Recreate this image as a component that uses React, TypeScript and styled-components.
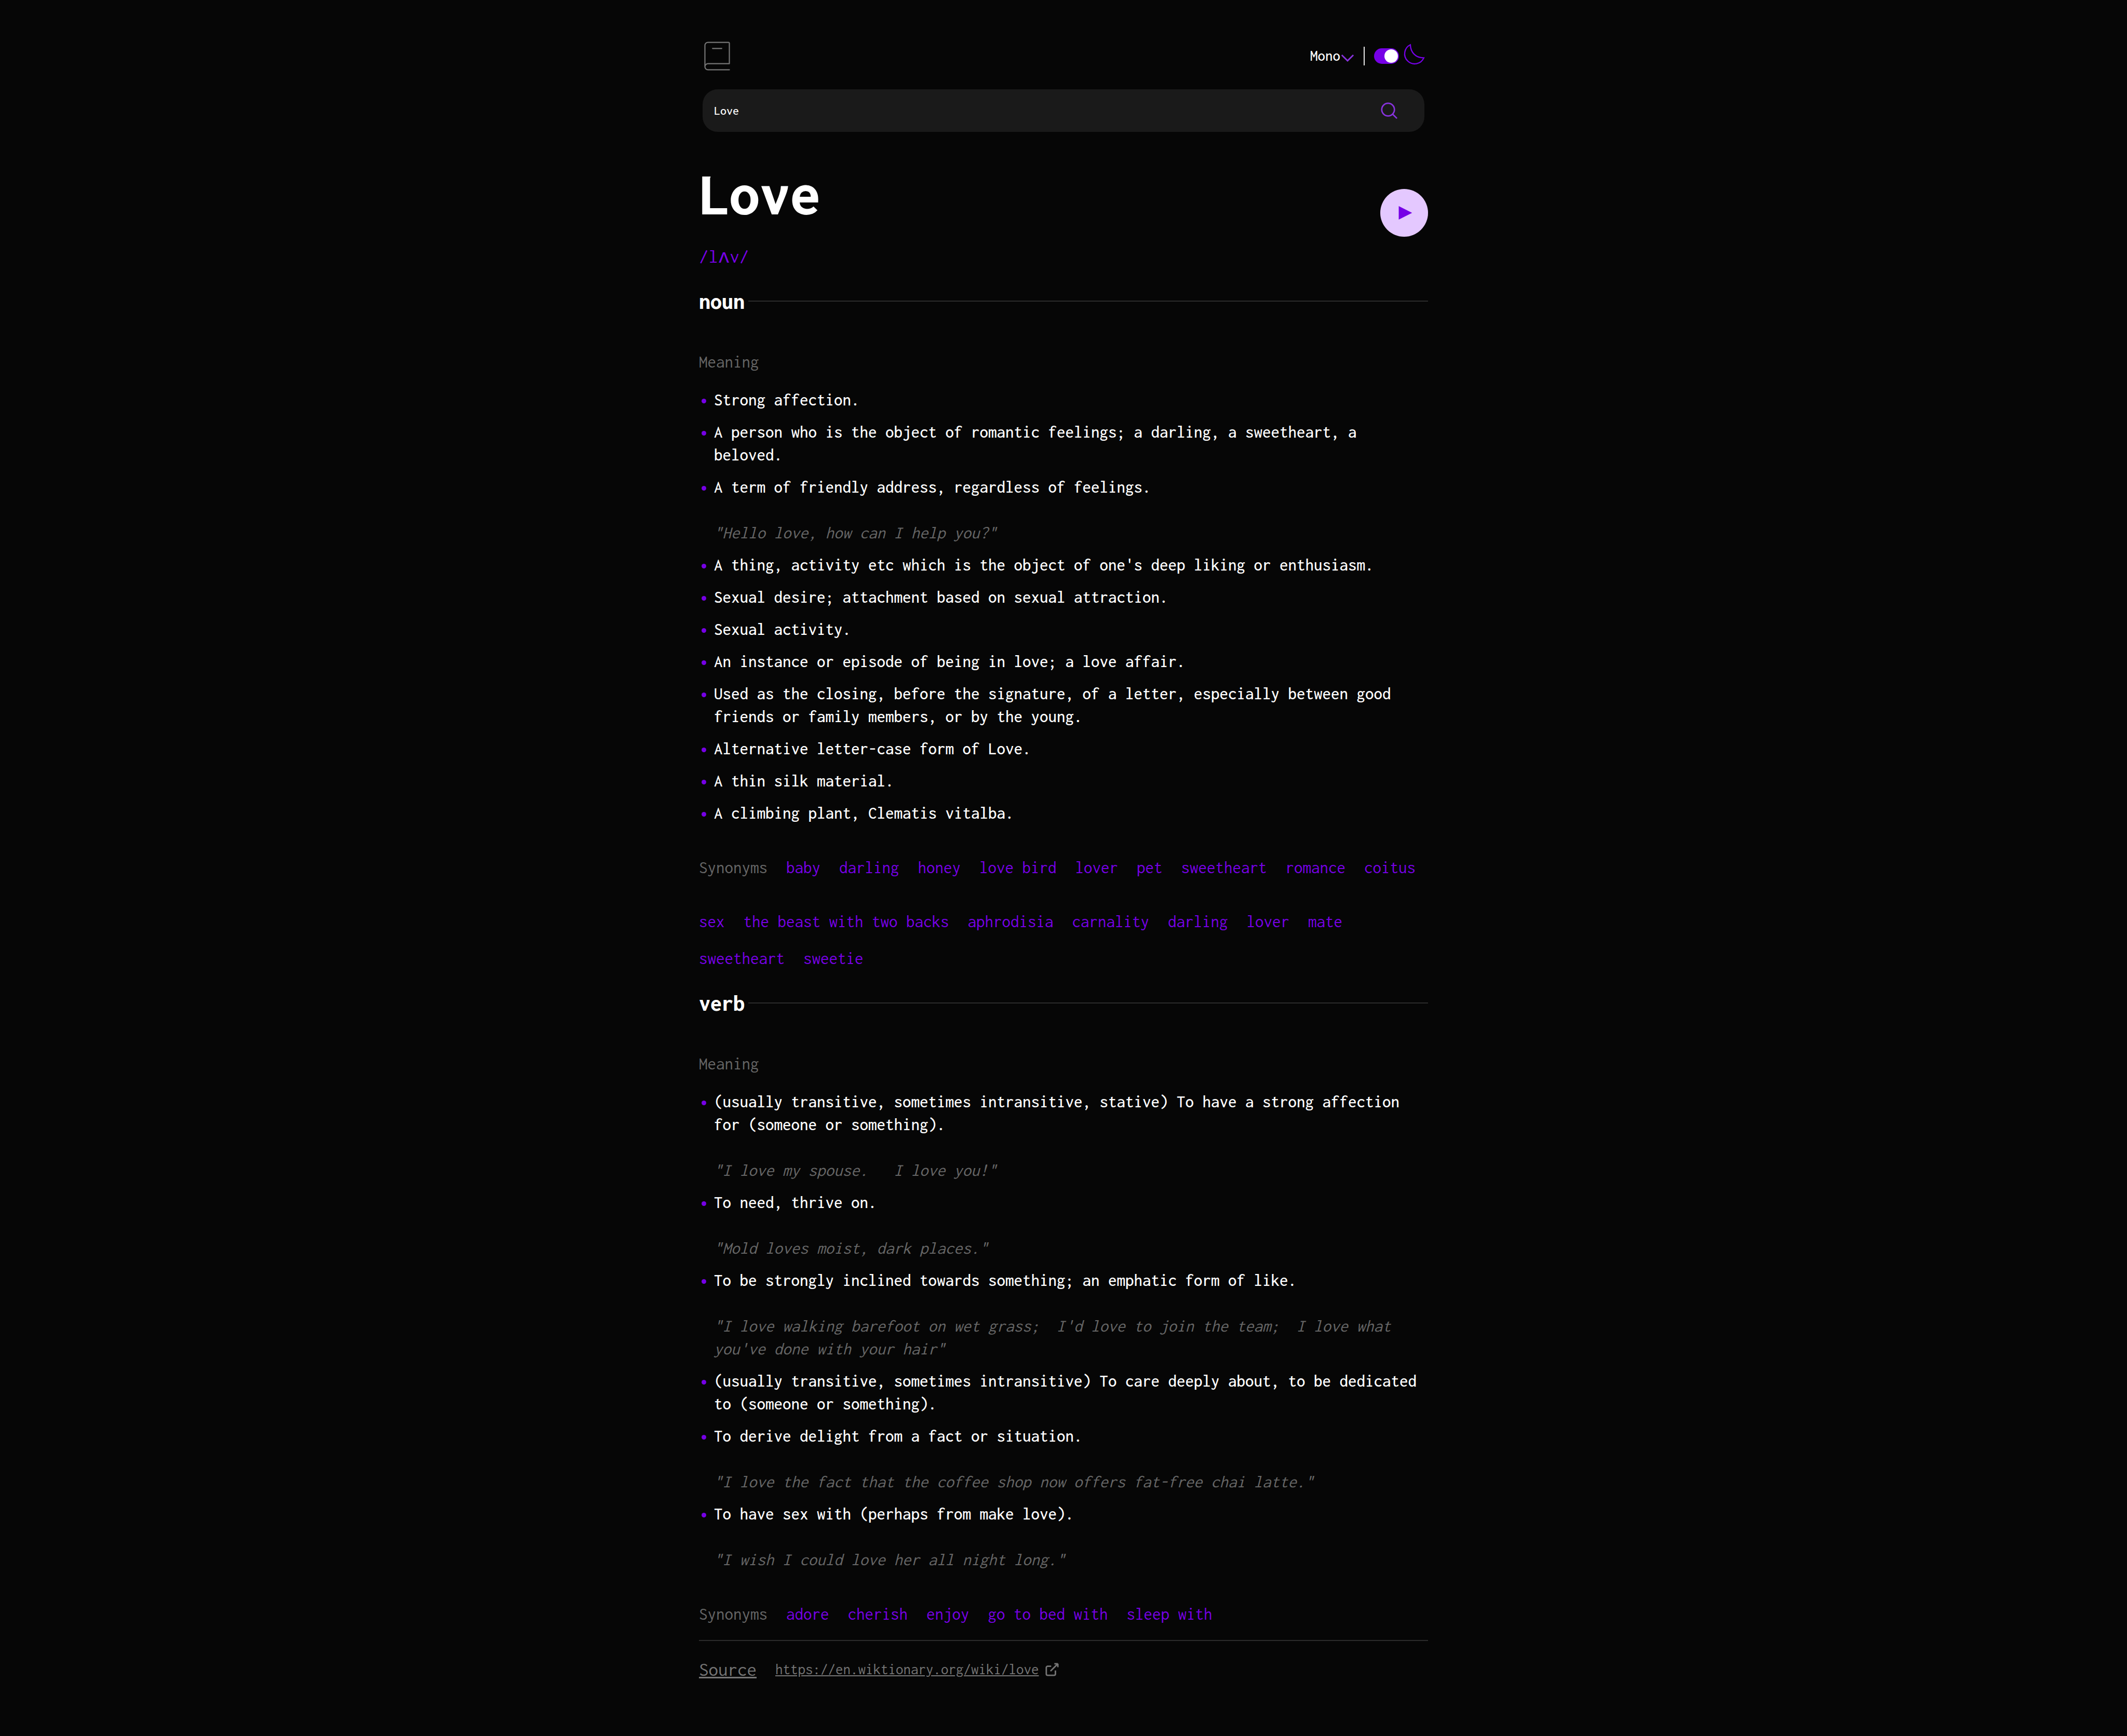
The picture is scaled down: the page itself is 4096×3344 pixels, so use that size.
import React, { useState } from "react";
import styled, { createGlobalStyle } from "styled-components";

const color = {
  page: "#060606",
  field: "#1a1a1a",
  text: "#ffffff",
  muted: "#666666",
  rule: "#2b2b2b",
  accent: "#7600e6",
  icon: "#8833dd",
  line: "#757575",
  play: "#e4c8ff",
};

const GlobalStyle = createGlobalStyle`
  *, *::before, *::after { box-sizing: border-box; }
  body {
    margin: 0;
    background: ${color.page};
    color: ${color.text};
    font: 33px/44px Inconsolata, "Noto Sans Mono CJK SC", "Liberation Mono", monospace;
  }
  h1, h2, h3, p, ul { margin: 0; padding: 0; }
  button, input, select { font-family: inherit; color: inherit; }
`;

const Page = styled.div`
  width: 100%;
  max-width: 1404px;
  margin: 0 auto;
  padding: 72px 0 106px;
`;

const Header = styled.header`
  display: flex;
  align-items: center;
  justify-content: space-between;
  height: 72px;
  margin: 0 7px 28px;
`;

const Logo = styled.svg`
  display: block;
  width: 50px;
  height: 56px;
  margin-left: 3px;
  fill: none;
  stroke: ${color.line};
  stroke-width: 1.5;
  stroke-linecap: round;
`;

const Controls = styled.div`
  display: flex;
  align-items: center;
  gap: 18px;
`;

const FontPicker = styled.label`
  display: flex;
  align-items: center;
`;

const FontSelect = styled.select`
  appearance: none;
  width: 59px;
  height: 44px;
  padding: 0;
  border: 0;
  background: transparent;
  font-size: 29px;
  font-weight: 500;
  line-height: 44px;
`;

const Chevron = styled.svg`
  display: block;
  width: 26px;
  height: 15px;
  margin-top: 6px;
  fill: none;
  stroke: ${color.icon};
  stroke-width: 1.5;
`;

const Divider = styled.span`
  width: 2px;
  height: 36px;
  background: #e9e9e9;
`;

const ThemeSwitch = styled.label`
  display: flex;
  align-items: center;
  gap: 9px;
`;

const Toggle = styled.input`
  appearance: none;
  display: flex;
  align-items: center;
  justify-content: flex-start;
  width: 48px;
  height: 30px;
  margin: 0;
  padding: 0 2px;
  border-radius: 15px;
  background: ${color.muted};

  &::before {
    content: "";
    width: 26px;
    height: 26px;
    border-radius: 50%;
    background: ${color.text};
  }

  &:checked {
    justify-content: flex-end;
    background: ${color.accent};
  }
`;

const Moon = styled.svg`
  display: block;
  width: 40px;
  height: 40px;
  margin-bottom: 6px;
  fill: none;
  stroke: ${color.accent};
  stroke-width: 1.3;
  overflow: visible;
`;

const SearchForm = styled.form`
  display: flex;
  align-items: center;
  height: 82px;
  margin: 0 7px 50px;
  padding: 0 51px 0 22px;
  border-radius: 29px;
  background: ${color.field};
`;

const SearchInput = styled.input`
  flex: 1;
  min-width: 0;
  height: 44px;
  padding: 0;
  border: 0;
  outline: 0;
  background: transparent;
  font-size: 24px;
  font-weight: 500;
`;

const IconButton = styled.button`
  display: flex;
  padding: 0;
  border: 0;
  background: transparent;
`;

const SearchIcon = styled.svg`
  width: 33px;
  height: 33px;
  fill: none;
  stroke: ${color.icon};
  stroke-width: 1.5;
`;

const EntryHead = styled.div`
  display: flex;
  align-items: center;
  justify-content: space-between;
`;

const Word = styled.h1`
  font-size: 117px;
  font-weight: 800;
  line-height: 140px;
`;

const Phonetic = styled.p`
  margin-top: 28px;
  font-size: 37px;
  color: ${color.accent};
`;

const PlayButton = styled.button`
  display: flex;
  width: 92px;
  height: 92px;
  padding: 0;
  border: 0;
  border-radius: 50%;
  background: ${color.play};

  svg {
    width: 100%;
    height: 100%;
    fill: ${color.accent};
  }
`;

const Section = styled.section`
  padding-top: 36px;
`;

const PartHeading = styled.div`
  display: flex;
  align-items: center;
  gap: 7px;

  &::after {
    content: "";
    flex: 1;
    height: 2px;
    background: ${color.rule};
  }
`;

const Part = styled.h2`
  font-size: 44px;
  font-weight: 800;
  line-height: 56px;
`;

const Label = styled.h3`
  font-size: 33px;
  font-weight: 400;
  color: ${color.muted};
`;

const MeaningLabel = styled(Label)`
  margin: 67px 0 29px;
`;

const SynonymLabel = styled(Label)`
  margin-bottom: 33px;
`;

const Meanings = styled.ul`
  display: flex;
  flex-direction: column;
  gap: 18px;
  list-style: none;
`;

const Meaning = styled.li`
  display: grid;
  grid-template-columns: 29px 1fr;
  font-weight: 500;

  &::before {
    content: "";
    width: 9px;
    height: 9px;
    margin: 20px 0 0 5px;
    border-radius: 50%;
    background: ${color.accent};
  }
`;

const Example = styled.p`
  margin-top: 44px;
  font-weight: 400;
  font-style: italic;
  color: ${color.muted};
  white-space: pre-wrap;
`;

const Synonyms = styled.div<{ $wraps: boolean }>`
  display: flex;
  flex-wrap: wrap;
  align-items: flex-start;
  gap: 27px 36px;
  height: ${(p) => (p.$wraps ? "auto" : "44px")};
  margin-top: 61px;
  color: ${color.accent};
`;

const Footer = styled.footer`
  display: flex;
  align-items: center;
  gap: 36px;
  margin-top: 28px;
  padding-top: 33px;
  border-top: 2px solid ${color.rule};
  color: ${color.line};
`;

const SourceLabel = styled.span`
  font-size: 37px;
  text-decoration: underline;
`;

const SourceLink = styled.a`
  display: flex;
  align-items: center;
  gap: 12px;
  font-size: 29px;
  color: inherit;

  svg {
    width: 26px;
    height: 26px;
    fill: none;
    stroke: currentColor;
    stroke-width: 1.5;
  }
`;

type Definition = { text: string; example?: string };
type PartEntry = { part: string; meanings: Definition[]; synonyms: string[] };

const entries: PartEntry[] = [
  {
    part: "noun",
    meanings: [
      { text: "Strong affection." },
      { text: "A person who is the object of romantic feelings; a darling, a sweetheart, a beloved." },
      { text: "A term of friendly address, regardless of feelings.", example: "Hello love, how can I help you?" },
      { text: "A thing, activity etc which is the object of one's deep liking or enthusiasm." },
      { text: "Sexual desire; attachment based on sexual attraction." },
      { text: "Sexual activity." },
      { text: "An instance or episode of being in love; a love affair." },
      { text: "Used as the closing, before the signature, of a letter, especially between good friends or family members, or by the young." },
      { text: "Alternative letter-case form of Love." },
      { text: "A thin silk material." },
      { text: "A climbing plant, Clematis vitalba." },
    ],
    synonyms: [
      "baby", "darling", "honey", "love bird", "lover", "pet", "sweetheart", "romance", "coitus",
      "sex", "the beast with two backs", "aphrodisia", "carnality", "darling", "lover", "mate",
      "sweetheart", "sweetie",
    ],
  },
  {
    part: "verb",
    meanings: [
      {
        text: "(usually transitive, sometimes intransitive, stative) To have a strong affection for (someone or something).",
        example: "I love my spouse.   I love you!",
      },
      { text: "To need, thrive on.", example: "Mold loves moist, dark places." },
      {
        text: "To be strongly inclined towards something; an emphatic form of like.",
        example: "I love walking barefoot on wet grass;  I'd love to join the team;  I love what you've done with your hair",
      },
      { text: "(usually transitive, sometimes intransitive) To care deeply about, to be dedicated to (someone or something)." },
      {
        text: "To derive delight from a fact or situation.",
        example: "I love the fact that the coffee shop now offers fat-free chai latte.",
      },
      { text: "To have sex with (perhaps from make love).", example: "I wish I could love her all night long." },
    ],
    synonyms: ["adore", "cherish", "enjoy", "go to bed with", "sleep with"],
  },
];

function PartSection({ part, meanings, synonyms }: PartEntry) {
  return (
    <Section>
      <PartHeading>
        <Part>{part}</Part>
      </PartHeading>
      <MeaningLabel>Meaning</MeaningLabel>
      <Meanings>
        {meanings.map((m) => (
          <Meaning key={m.text}>
            <div>
              {m.text}
              {m.example && <Example>{`"${m.example}"`}</Example>}
            </div>
          </Meaning>
        ))}
      </Meanings>
      <Synonyms $wraps={synonyms.length > 8}>
        <SynonymLabel>Synonyms</SynonymLabel>
        {synonyms.map((s, i) => (
          <span key={i}>{s}</span>
        ))}
      </Synonyms>
    </Section>
  );
}

export default function App() {
  const [query, setQuery] = useState("Love");
  const [dark, setDark] = useState(true);

  return (
    <>
      <GlobalStyle />
      <Page>
        <Header>
          <Logo viewBox="0 0 34 38" aria-hidden="true">
            <path d="M1 33V5a4 4 0 0 1 4-4h26.8A1.2 1.2 0 0 1 33 2.2V29M5 29h28M5 37h28M5 37a4 4 0 1 1 0-8M11 9h12" />
          </Logo>
          <Controls>
            <FontPicker>
              <FontSelect aria-label="Font" defaultValue="Mono">
                <option>Mono</option>
              </FontSelect>
              <Chevron viewBox="0 0 14 8" aria-hidden="true">
                <path d="m1 1 6 6 6-6" />
              </Chevron>
            </FontPicker>
            <Divider />
            <ThemeSwitch>
              <Toggle
                type="checkbox"
                aria-label="Dark mode"
                checked={dark}
                onChange={(e) => setDark(e.target.checked)}
              />
              <Moon viewBox="0.5 0.5 22 22" aria-hidden="true">
                <path d="M7.6 1.2A10.6 10.6 0 1 0 21.9 15C13.5 15.2 7.9 9.6 7.6 1.2Z" />
              </Moon>
            </ThemeSwitch>
          </Controls>
        </Header>

        <SearchForm onSubmit={(e) => e.preventDefault()}>
          <SearchInput aria-label="Search word" value={query} onChange={(e) => setQuery(e.target.value)} />
          <IconButton type="submit" aria-label="Search">
            <SearchIcon viewBox="0 0 18 18" aria-hidden="true">
              <path d="m12.663 12.663 4.3 4.3M1 7.665a6.665 6.665 0 1 0 13.33 0 6.665 6.665 0 1 0-13.33 0Z" />
            </SearchIcon>
          </IconButton>
        </SearchForm>

        <main>
          <EntryHead>
            <div>
              <Word>Love</Word>
              <Phonetic>/lʌv/</Phonetic>
            </div>
            <PlayButton type="button" aria-label="Play pronunciation">
              <svg viewBox="0 0 75 75" aria-hidden="true">
                <path d="M29 27v21l21-10.5z" />
              </svg>
            </PlayButton>
          </EntryHead>
          {entries.map((entry) => (
            <PartSection key={entry.part} {...entry} />
          ))}
        </main>

        <Footer>
          <SourceLabel>Source</SourceLabel>
          <SourceLink href="https://en.wiktionary.org/wiki/love">
            https://en.wiktionary.org/wiki/love
            <svg viewBox="0 0 14 14" aria-hidden="true">
              <path d="M6.09 3.545H2.456A1.455 1.455 0 0 0 1 5v6.545A1.455 1.455 0 0 0 2.455 13H9a1.455 1.455 0 0 0 1.455-1.455V7.91m-5.091.727L13 1m0 0H9.364M13 1v3.636" />
            </svg>
          </SourceLink>
        </Footer>
      </Page>
    </>
  );
}
